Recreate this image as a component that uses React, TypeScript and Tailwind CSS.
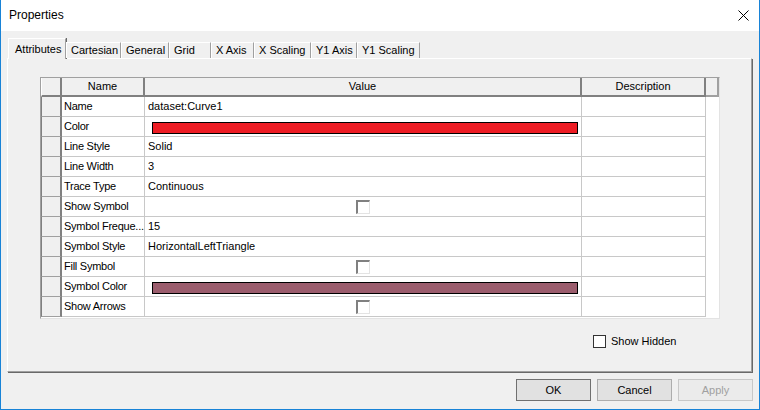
import React from 'react'

const font = { fontFamily: '"Liberation Sans", Arial, sans-serif' }

const tabs = [
  { label: 'Attributes', w: 'w-[58px]' },
  { label: 'Cartesian', w: 'w-[55px]' },
  { label: 'General', w: 'w-[48px]' },
  { label: 'Grid', w: 'w-[42px]' },
  { label: 'X Axis', w: 'w-[43px]' },
  { label: 'X Scaling', w: 'w-[57px]' },
  { label: 'Y1 Axis', w: 'w-[46px]' },
  { label: 'Y1 Scaling', w: 'w-[63px]' },
]

type Row = { name: string; kind: 'text' | 'color' | 'check'; value?: string; color?: string }

const rows: Row[] = [
  { name: 'Name', kind: 'text', value: 'dataset:Curve1' },
  { name: 'Color', kind: 'color', color: 'bg-[#ed1c24]' },
  { name: 'Line Style', kind: 'text', value: 'Solid' },
  { name: 'Line Width', kind: 'text', value: '3' },
  { name: 'Trace Type', kind: 'text', value: 'Continuous' },
  { name: 'Show Symbol', kind: 'check' },
  { name: 'Symbol Freque...', kind: 'text', value: '15' },
  { name: 'Symbol Style', kind: 'text', value: 'HorizontalLeftTriangle' },
  { name: 'Fill Symbol', kind: 'check' },
  { name: 'Symbol Color', kind: 'color', color: 'bg-[#9b5d6d]' },
  { name: 'Show Arrows', kind: 'check' },
]

function ValueCell({ row }: { row: Row }) {
  if (row.kind === 'color') {
    return (
      <div className="w-[437px] h-[20px] border-r border-b border-[#c8c8c8] pl-[7px] pt-[5px]">
        <div className={`w-[426px] h-[12px] border border-black ${row.color}`}></div>
      </div>
    )
  }
  if (row.kind === 'check') {
    return (
      <div className="w-[437px] h-[20px] border-r border-b border-[#c8c8c8] flex items-center justify-center">
        <div className="w-[14px] h-[14px] bg-white border-t-2 border-l-2 border-[#808080] border-r border-b border-r-[#e3e3e3] border-b-[#e3e3e3]"></div>
      </div>
    )
  }
  return (
    <div className="w-[437px] h-[20px] border-r border-b border-[#c8c8c8] flex items-center pl-[3px]">
      {row.value}
    </div>
  )
}

export default function App() {
  return (
    <div
      className="w-[760px] h-[410px] flex flex-col border-x border-b border-[#1883d7] bg-[#f0f0f0] text-[11px] text-black overflow-hidden"
      style={font}
    >
      {/* title bar */}
      <div className="h-[31px] bg-white flex items-center justify-between pl-[8px] pr-[10px] shrink-0">
        <span className="text-[12px] pb-[1px]">Properties</span>
        <svg width="11" height="11" viewBox="0 0 11 11">
          <path d="M0.5 0.5 L10.5 10.5 M10.5 0.5 L0.5 10.5" stroke="#000" strokeWidth="1" />
        </svg>
      </div>

      <div className="flex-1 px-[6px] flex flex-col">
        {/* tabs */}
        <div className="mt-[7px] h-[20px] flex items-end pl-[1px] relative z-10">
          {tabs.map((t, i) =>
            i === 0 ? (
              <div
                key={t.label}
                className={`${t.w} h-[21px] -mb-[1px] bg-[#f0f0f0] border-t border-l border-white border-r border-r-[#a0a0a0] shadow-[1px_0_0_#696969] flex items-start pt-[2px] pl-[6px]`}
              >
                {t.label}
              </div>
            ) : (
              <div
                key={t.label}
                className={`${t.w} h-[16px] bg-[#f0f0f0] border-t border-l border-white border-r border-r-[#a0a0a0] flex items-center pl-[4px] pb-[1px]`}
              >
                {t.label}
              </div>
            )
          )}
        </div>

        {/* panel */}
        <div className="w-[745px] h-[314px] border-t border-l border-white border-r border-b border-r-[#a0a0a0] border-b-[#a0a0a0] shadow-[1px_1px_0_#696969] pl-[32px] pt-[18px] flex flex-col">
          {/* grid */}
          <div className="w-[680px] h-[242px] border-l border-t border-[#a0a0a0] border-r border-b border-r-[#e3e3e3] border-b-[#e3e3e3] bg-white flex flex-col">
            {/* header */}
            <div className="flex h-[19px] bg-[#f0f0f0]">
              <div className="w-[21px] h-[19px] border-r-2 border-b-2 border-[#808080] border-l border-l-white"></div>
              <div className="w-[83px] h-[19px] border-r-2 border-b-2 border-[#808080] flex items-center justify-center">Name</div>
              <div className="w-[437px] h-[19px] border-r-2 border-b-2 border-[#808080] flex items-center justify-center">Value</div>
              <div className="w-[124px] h-[19px] border-r-2 border-b-2 border-[#808080] flex items-center justify-center">Description</div>
              <div className="w-[13px] h-[19px] border-r-2 border-b-2 border-[#a0a0a0]"></div>
            </div>
            {rows.map((r) => (
              <div key={r.name} className="flex h-[20px]">
                <div className="w-[21px] h-[20px] bg-[#f0f0f0] border-l border-l-[#808080] border-r-2 border-r-[#808080] border-b border-b-[#a0a0a0]"></div>
                <div className="w-[83px] h-[20px] border-r border-b border-[#c8c8c8] flex items-center pl-[2px] whitespace-nowrap overflow-hidden tracking-[-0.25px]">
                  {r.name}
                </div>
                <ValueCell row={r} />
                <div className="w-[124px] h-[20px] border-r border-b border-[#c8c8c8]"></div>
                <div className="w-[13px] h-[20px]"></div>
              </div>
            ))}
          </div>

          {/* show hidden */}
          <div className="mt-[14px] ml-[553px] flex items-center gap-[5px]">
            <div className="w-[13px] h-[13px] bg-white border border-[#333333]"></div>
            <span className="pb-[1px]">Show Hidden</span>
          </div>
        </div>

        {/* buttons */}
        <div className="mt-[7px] flex justify-end gap-[6px]">
          <button className="w-[75px] h-[22px] bg-[#e1e1e1] border border-[#707070] outline outline-1 -outline-offset-2 outline-[#e1e1e1]">OK</button>
          <button className="w-[75px] h-[22px] bg-[#e1e1e1] border border-[#adadad]">Cancel</button>
          <button className="w-[75px] h-[22px] bg-[#ebebeb] border border-[#c8c8c8] text-[#a0a0a0]">Apply</button>
        </div>
      </div>
    </div>
  )
}
